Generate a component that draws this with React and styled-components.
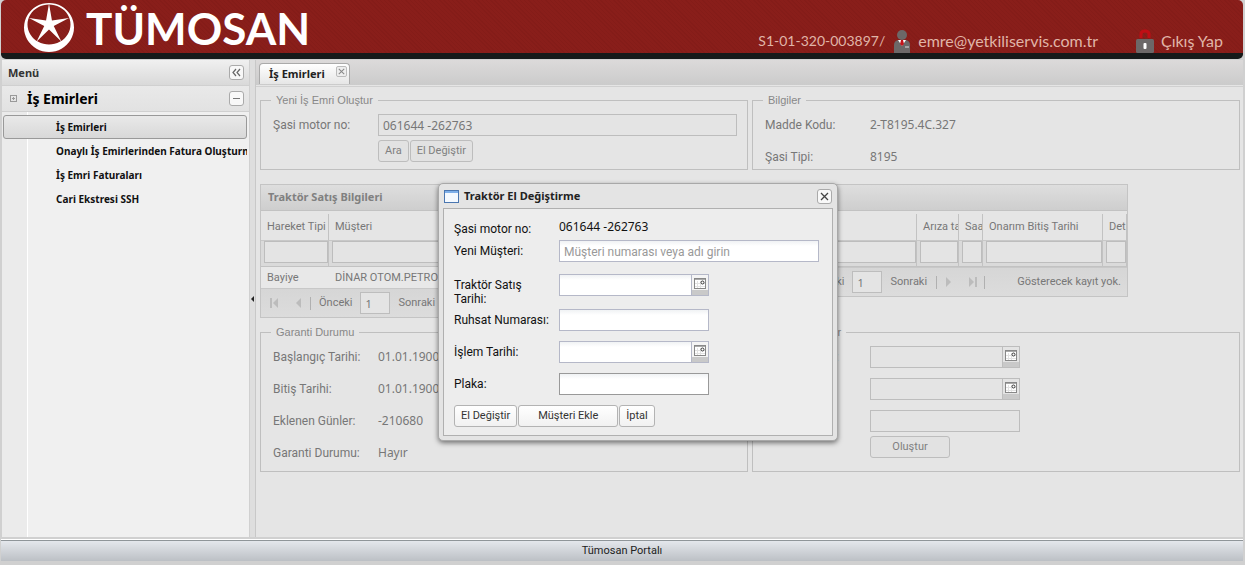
import React from "react";
import styled, { createGlobalStyle } from "styled-components";

const ui = `Roboto, Tahoma, sans-serif`;
const wide = `"Noto Sans", Tahoma, sans-serif`;

const GlobalStyle = createGlobalStyle`
  * {
    box-sizing: border-box;
  }

  body {
    margin: 0;
    background: #d0d0d0;
    color: #111;
    font: 12px/16px ${ui};
  }

  input, button {
    margin: 0;
    font-family: ${ui};
  }
`;

const Page = styled.div`
  position: relative;
  display: flex;
  flex-direction: column;
  min-height: 100vh;
  padding: 0 2px 4px 1px;
`;

/* ---------- top banner ---------- */

const Banner = styled.header`
  display: flex;
  justify-content: space-between;
  height: 59px;
  padding: 0 20px 0 22px;
  border-bottom: 6px solid #161a1a;
  border-radius: 5px;
  background: repeating-linear-gradient(45deg, transparent 0 2px, rgba(60, 0, 0, 0.06) 2px 3px), #891e1a;
`;

const Brand = styled.a`
  display: flex;
  align-items: center;
  gap: 11px;
  color: #fff;
  text-decoration: none;
`;

const BrandName = styled.span`
  padding-top: 4px;
  font: bold 44px/49px Lato, sans-serif;
`;

const Account = styled.div`
  display: flex;
  align-items: flex-end;
  font: 16px/24px Lato, sans-serif;
  color: #e0b5a8;
`;

const DealerCode = styled.span`
  font-size: 14px;
`;

const AccountLink = styled.a`
  display: flex;
  align-items: flex-end;
  gap: 7px;
  margin-left: ${(p) => p.$space}px;
  color: inherit;
  text-decoration: none;
`;

/* ---------- frame ---------- */

const Frame = styled.div`
  display: flex;
  flex: 1;
  min-height: 0;
  padding: 1px 0 3px;
`;

const Sidebar = styled.nav`
  display: flex;
  flex-direction: column;
  width: 249px;
  flex: none;
  border: 1px solid #d0d0d0;
  border-width: 0 1px;
  background: #f0f0f0;
  font-family: ${wide};
`;

const SideHeader = styled.div`
  display: flex;
  align-items: center;
  justify-content: space-between;
  height: 26px;
  padding: 0 5px 0 6px;
  border-bottom: 1px solid #d0d0d0;
  background: linear-gradient(#f0f0f0, #d9d9d9);
  font-size: 11px;
  font-weight: bold;
  color: #333;
`;

const AccordionHeader = styled(SideHeader)`
  background: linear-gradient(#e9e9e9, #e2e2e2);
  font-size: 14px;
  color: #000;
`;

const AccordionTitle = styled.span`
  display: flex;
  align-items: center;
  gap: 9px;
  padding-left: 2px;
`;

const ToolButton = styled.button`
  display: flex;
  align-items: center;
  justify-content: center;
  width: 15px;
  height: 15px;
  padding: 0;
  border: 1px solid #aaa;
  border-radius: 3px;
  background: #f8f8f8;
`;

const Tree = styled.ul`
  flex: 1;
  margin: 0;
  padding: 3px 2px 0 1px;
  list-style: none;
  background: linear-gradient(90deg, #ebebeb 25px, #fff 25px, #fff 26px, #f0f0f0 26px);
`;

const TreeLink = styled.a`
  display: block;
  overflow: hidden;
  height: 24px;
  padding-left: 52px;
  border: 1px solid ${(p) => (p.$active ? "#999" : "transparent")};
  border-right-width: ${(p) => (p.$active ? 1 : 0)}px;
  border-radius: 3px;
  background: ${(p) => (p.$active ? "linear-gradient(#e9e9e9, #d8d8d8)" : "none")};
  font-size: 10px;
  font-weight: bold;
  line-height: 22px;
  white-space: nowrap;
  color: #111;
  text-decoration: none;
`;

const Splitter = styled.div`
  display: flex;
  align-items: center;
  flex: none;
  width: 5px;
  background: #dedede;
`;

const Workspace = styled.main`
  display: flex;
  flex-direction: column;
  flex: 1;
  min-width: 0;
  border-left: 1px solid #c8c8c8;
  background: #e5e5e5;
`;

const TabBar = styled.div`
  display: flex;
  align-items: flex-end;
  height: 25px;
  padding: 0 0 1px 3px;
  background: linear-gradient(#dcdada, #cbcbcb);
`;

const Tab = styled.div`
  display: flex;
  justify-content: space-between;
  width: 91px;
  height: 21px;
  padding: 2px 2px 0 9px;
  border: 1px solid #aaa;
  border-bottom: 0;
  border-radius: 4px 4px 0 0;
  background: linear-gradient(#fff, #e6e6e6);
  font-family: ${wide};
  font-size: 11px;
  font-weight: bold;
  color: #222;
`;

const TabClose = styled.button`
  display: flex;
  width: 11px;
  height: 11px;
  padding: 1px;
  border: 1px solid #bbb;
  border-radius: 2px;
  background: #eee;
`;

const Content = styled.div`
  flex: 1;
  margin-top: 1px;
  padding: 6px 3px 0 4px;
  border-top: 1px solid #d0d0d0;
`;

const Split = styled.div`
  display: grid;
  grid-template-columns: 1fr 1fr;
  align-items: ${(p) => p.$align || "stretch"};
  gap: 4px;
  margin-bottom: ${(p) => p.$space || 0}px;
`;

/* ---------- forms ---------- */

const Group = styled.fieldset`
  display: flex;
  flex-direction: column;
  gap: 10px;
  min-width: 0;
  margin: 0;
  padding: 7px 10px ${(p) => (p.$tight ? 1 : 7)}px 12px;
  border: 1px solid #bfbfbf;
  color: #777;
`;

const Legend = styled.legend`
  margin-left: -2px;
  padding: 0 5px;
  font: 11px/14px "Liberation Sans", Arial, sans-serif;
  color: #888;
`;

const Field = styled.div`
  display: flex;
  min-height: 22px;
  line-height: 22px;
`;

const FieldLabel = styled.label`
  flex: none;
  width: 105px;
`;

const FieldValue = styled.output`
  font-family: ${wide};
`;

const Stack = styled.div`
  flex: 1;
  display: flex;
  flex-direction: column;
  align-items: flex-start;
  gap: 4px;
`;

const TextInput = styled.input`
  width: ${(p) => p.$width || "100%"};
  height: 22px;
  padding: 0 4px;
  border: 1px solid ${(p) => (p.$dim ? "#bdbdbd" : p.$strong ? "#999" : "#b5b8c8")};
  border-radius: 0;
  background: ${(p) => (p.$dim ? "#e4e4e4" : "linear-gradient(#f0f2f4, #fff 5px)")};
  font-family: ${wide};
  font-size: ${(p) => p.$size || 12}px;
  color: ${(p) => (p.$dim ? "#777" : "#111")};

  &::placeholder {
    font-family: ${ui};
    color: #999;
    opacity: 1;
  }
`;

const DateBox = styled.span`
  display: flex;
  width: 150px;
`;

const DateTrigger = styled.button`
  display: flex;
  justify-content: center;
  flex: none;
  width: 17px;
  height: 22px;
  padding: 3px 0 0;
  border: 1px solid ${(p) => (p.$dim ? "#bdbdbd" : "#b5b8c8")};
  border-left: 0;
  background: linear-gradient(${(p) => (p.$dim ? "#e4e4e4" : "#f4f4f4")} 15px, #c9c9c9 15px);
`;

const Button = styled.button`
  min-width: ${(p) => p.$width || 0}px;
  height: 22px;
  padding: 0 6px;
  border: 1px solid ${(p) => (p.$dim ? "#bdbdbd" : "#b3b3b3")};
  border-radius: 3px;
  background: ${(p) => (p.$dim ? "#e2e2e2" : "linear-gradient(#fff, #f1f1f1)")};
  font-size: 11px;
  line-height: 20px;
  color: ${(p) => (p.$dim ? "#808080" : "#333")};
`;

const ButtonRow = styled.div`
  display: flex;
  gap: 1px;
`;

/* ---------- grids ---------- */

const GridPanel = styled.section`
  width: ${(p) => p.$width || "auto"};
  min-width: 0;
  border: 1px solid #c4c4c4;
  font-size: 11px;
  color: #777;
`;

const GridTitle = styled.h2`
  height: 26px;
  margin: 0;
  padding: 0 7px;
  border-bottom: 1px solid #c2c2c2;
  background: linear-gradient(#dedede, #cecece);
  font-family: ${wide};
  font-size: 11px;
  line-height: 24px;
  color: #808080;
`;

const Table = styled.table`
  width: 100%;
  margin-top: 3px;
  border-spacing: 0;
  table-layout: fixed;
`;

const HeadCell = styled.th`
  overflow: hidden;
  width: ${(p) => (p.$width ? p.$width + "px" : "auto")};
  height: 27px;
  padding: 0 0 0 6px;
  border-right: 1px solid #c2c2c2;
  border-bottom: 1px solid #c8c8c8;
  font-weight: normal;
  text-align: left;
  white-space: nowrap;
  text-overflow: clip;
`;

const FilterCell = styled.td`
  padding: 0 0 3px 3px;
  border-right: 1px solid #c2c2c2;
  border-bottom: 1px solid #c2c2c2;
  background: #dadada;

  input {
    display: block;
  }
`;

const Cell = styled.td`
  overflow: hidden;
  height: 21px;
  padding: 0 6px;
  background: #e8e8e8;
  white-space: nowrap;
`;

const PagerBar = styled.div`
  display: flex;
  align-items: center;
  height: 29px;
  padding: 0 6px 0 2px;
  border-top: 1px solid #c8c8c8;
  background: linear-gradient(#d6d6d6, #dcdcdc);
`;

const PagerButton = styled.button`
  display: flex;
  align-items: center;
  justify-content: center;
  width: 23px;
  height: 22px;
  padding: 0;
  border: 0;
  background: none;
`;

const PagerDivider = styled.span`
  width: 1px;
  height: 13px;
  margin-left: 1px;
  background: #b0b0b0;
`;

const PagerText = styled.span`
  padding: 0 8px;
`;

const PagerTotal = styled.span`
  margin-left: auto;
`;

/* ---------- dialog ---------- */

const Dialog = styled.section`
  position: absolute;
  top: 183px;
  left: 438px;
  width: 400px;
  padding: 0 4px 4px;
  border: 1px solid #a8a8a8;
  border-radius: 5px;
  background: #e4e4e4;
  box-shadow: 0 2px 5px rgba(0, 0, 0, 0.5);
`;

const DialogHeader = styled.header`
  display: flex;
  align-items: center;
  height: 24px;
  gap: 5px;
  padding: 0 1px;
`;

const DialogTitle = styled.h1`
  flex: 1;
  margin: 0;
  font-family: ${wide};
  font-size: 11px;
  line-height: 16px;
  color: #222;
`;

const DialogBody = styled.form`
  display: flex;
  flex-direction: column;
  gap: 10px;
  padding: 9px 13px 8px 10px;
  border: 1px solid #b0b0b0;
  background: #ededed;
`;

const DialogField = styled(Field)`
  height: ${(p) => (p.$tall ? 25 : 22)}px;
  line-height: 14px;

  ${FieldLabel} {
    padding: 4px 10px 0 0;
  }
`;

const DialogIntro = styled.div`
  display: flex;
  flex-direction: column;
  padding-bottom: 2px;
`;

const DialogValue = styled(FieldValue)`
  line-height: 18px;
`;

/* ---------- footer ---------- */

const StatusBar = styled.footer`
  height: 21px;
  border-top: 1px solid #8f9599;
  box-shadow: 0 -1px #fff;
  background: linear-gradient(#e4e7ec, #bcc0c5);
  font-size: 11px;
  line-height: 19px;
  text-align: center;
  color: #222;
`;

/* ---------- drawings ---------- */

const starPoints = Array.from({ length: 10 }, (_, i) => {
  const r = i % 2 ? 5 : 21;
  const a = (Math.PI / 5) * i - Math.PI / 2;
  return `${26 + r * Math.cos(a)},${24.5 + r * Math.sin(a)}`;
}).join(" ");

const Logo = () => (
  <svg width="52" height="53" viewBox="0 0 52 53" fill="#fff" aria-hidden="true">
    <path
      fillRule="evenodd"
      d="M26 3a25 24.500 0 1 0 .01 0zM26 4.500a21.500 20 0 1 1-.01 0z"
    />
    <polygon points={starPoints} />
  </svg>
);

const UserIcon = () => (
  <svg width="18" height="24" viewBox="0 0 18 24" aria-hidden="true">
    <circle cx="9" cy="6" r="5" fill="#6c6868" />
    <path d="M1 24V16q0-4 4-5h8q4 1 4 5v8z" fill="#6c6868" />
    <path d="M5 11h8l-4 6z" fill="#fff" />
    <path d="M8 11h2l1 4-2 2-2-2z" fill="#c3141a" />
    <path d="M12 18h4" stroke="#ddd" />
  </svg>
);

const LockIcon = () => (
  <svg width="18" height="25" viewBox="0 0 18 25" aria-hidden="true">
    <path d="M5 10V6q0-3 4-3t4 3v4" fill="none" stroke="#c00d14" strokeWidth="3" />
    <rect y="11" width="18" height="14" rx="1.500" fill="#6c6868" />
    <rect x="7.500" y="15" width="3" height="6" rx="1" fill="#fff" />
  </svg>
);

const CollapseIcon = () => (
  <svg width="11" height="9" fill="none" stroke="#666" aria-hidden="true">
    <path d="M5 1L2 4.500 5 8M9 1L6 4.500 9 8" strokeWidth="1.200" />
  </svg>
);

const MinusIcon = () => (
  <svg width="9" height="9" aria-hidden="true">
    <path d="M1 4.500h7" stroke="#777" />
  </svg>
);

const NodeIcon = () => (
  <svg width="8" height="8" fill="none" stroke="#999" aria-hidden="true">
    <rect x=".5" y=".5" width="6" height="6" />
    <path d="M2 3.500h3M3.500 2v3" />
  </svg>
);

const CrossIcon = ({ size, color }) => (
  <svg width={size} height={size} viewBox="0 0 9 9" aria-hidden="true">
    <path d="M1 1l7 7M8 1L1 8" stroke={color} strokeWidth="1.300" />
  </svg>
);

const WindowIcon = () => (
  <svg width="15" height="13" aria-hidden="true">
    <rect x=".5" y=".5" width="14" height="12" fill="#f4f9ff" stroke="#4a76b0" />
    <path d="M1 2h13" stroke="#7fb0ea" strokeWidth="2" />
  </svg>
);

const CalendarIcon = () => (
  <svg width="12" height="12" aria-hidden="true">
    <rect x=".5" y=".5" width="11" height="10" fill="#fff" stroke="#888" />
    <path d="M1 1.500h10" stroke="#aaa" />
    <path d="M3.500 3v7M1 5.500h10M6.500 3v7M1 8.500h10" stroke="#e2e2e2" />
    <circle cx="8.500" cy="4.500" r="1.500" fill="#fff" stroke="#333" />
  </svg>
);

const ArrowIcon = ({ bar, flip }) => (
  <svg width="12" height="12" viewBox="0 0 12 12" aria-hidden="true">
    <g transform={flip ? "rotate(180 6 6)" : undefined} fill="#bcbcbc">
      <path d="M9 1v10L4 6z" />
      {bar && <path d="M1 1h2v10H1z" />}
    </g>
  </svg>
);

/* ---------- pieces ---------- */

const menuItems = [
  "İş Emirleri",
  "Onaylı İş Emirlerinden Fatura Oluşturma",
  "İş Emri Faturaları",
  "Cari Ekstresi SSH",
];

const warranty = [
  ["Başlangıç Tarihi:", "01.01.1900"],
  ["Bitiş Tarihi:", "01.01.1900"],
  ["Eklenen Günler:", "-210680"],
  ["Garanti Durumu:", "Hayır"],
];

const salesColumns = [{ title: "Hareket Tipi", width: 68 }, { title: "Müşteri" }];

const repairColumns = [
  { title: "İş Emri No" },
  { title: "Arıza tarihi", width: 42 },
  { title: "Saat", width: 24 },
  { title: "Onarım Bitiş Tarihi", width: 120 },
  { title: "Detay", width: 24 },
];

const ReadOnly = ({ label, value }) => (
  <Field>
    <FieldLabel as="span">{label}</FieldLabel>
    <FieldValue>{value}</FieldValue>
  </Field>
);

const DateField = ({ id, dim }) => (
  <DateBox>
    <TextInput id={id} $dim={dim} />
    <DateTrigger type="button" aria-label="Tarih seç" $dim={dim}>
      <CalendarIcon />
    </DateTrigger>
  </DateBox>
);

const Pager = ({ note }) => (
  <PagerBar>
    <PagerButton aria-label="İlk sayfa"><ArrowIcon bar /></PagerButton>
    <PagerButton aria-label="Önceki sayfa"><ArrowIcon /></PagerButton>
    <PagerDivider />
    <PagerText>Önceki</PagerText>
    <TextInput $dim $width="30px" $size={11} defaultValue="1" aria-label="Sayfa" />
    <PagerText>Sonraki</PagerText>
    <PagerDivider />
    <PagerButton aria-label="Sonraki sayfa"><ArrowIcon flip /></PagerButton>
    <PagerButton aria-label="Son sayfa"><ArrowIcon bar flip /></PagerButton>
    <PagerDivider />
    {note && <PagerTotal>{note}</PagerTotal>}
  </PagerBar>
);

const DataGrid = ({ title, columns, rows = [], width, note }) => (
  <GridPanel $width={width}>
    <GridTitle>{title}</GridTitle>
    <Table>
      <thead>
        <tr>
          {columns.map((c) => (
            <HeadCell key={c.title} $width={c.width}>{c.title}</HeadCell>
          ))}
        </tr>
        <tr>
          {columns.map((c) => (
            <FilterCell key={c.title}>
              <TextInput $dim aria-label={c.title} />
            </FilterCell>
          ))}
        </tr>
      </thead>
      <tbody>
        {rows.map((row) => (
          <tr key={row[0]}>
            {row.map((value) => (
              <Cell key={value}>{value}</Cell>
            ))}
          </tr>
        ))}
      </tbody>
    </Table>
    <Pager note={note} />
  </GridPanel>
);

const TransferDialog = () => (
  <Dialog role="dialog" aria-labelledby="transfer-title">
    <DialogHeader>
      <WindowIcon />
      <DialogTitle id="transfer-title">Traktör El Değiştirme</DialogTitle>
      <ToolButton aria-label="Kapat"><CrossIcon size={9} color="#444" /></ToolButton>
    </DialogHeader>
    <DialogBody>
      <DialogIntro>
        <DialogField>
          <FieldLabel as="span">Şasi motor no:</FieldLabel>
          <DialogValue>061644 -262763</DialogValue>
        </DialogField>
        <DialogField>
          <FieldLabel htmlFor="customer">Yeni Müşteri:</FieldLabel>
          <TextInput id="customer" placeholder="Müşteri numarası veya adı girin" />
        </DialogField>
      </DialogIntro>
      <DialogField $tall>
        <FieldLabel htmlFor="sale-date">Traktör Satış Tarihi:</FieldLabel>
        <DateField id="sale-date" />
      </DialogField>
      <DialogField>
        <FieldLabel htmlFor="licence">Ruhsat Numarası:</FieldLabel>
        <TextInput id="licence" $width="150px" />
      </DialogField>
      <DialogField>
        <FieldLabel htmlFor="process-date">İşlem Tarihi:</FieldLabel>
        <DateField id="process-date" />
      </DialogField>
      <DialogField>
        <FieldLabel htmlFor="plate">Plaka:</FieldLabel>
        <TextInput id="plate" $width="150px" $strong />
      </DialogField>
      <ButtonRow>
        <Button type="button">El Değiştir</Button>
        <Button type="button" $width={100}>Müşteri Ekle</Button>
        <Button type="button">İptal</Button>
      </ButtonRow>
    </DialogBody>
  </Dialog>
);

const App = () => {
  return (
    <>
      <GlobalStyle />
      <Page>
        <Banner>
          <Brand href="#">
            <Logo />
            <BrandName>TÜMOSAN</BrandName>
          </Brand>
          <Account>
            <DealerCode>S1-01-320-003897/</DealerCode>
            <AccountLink href="#" $space={8}>
              <UserIcon />
              emre@yetkiliservis.com.tr
            </AccountLink>
            <AccountLink href="#" $space={38}>
              <LockIcon />
              Çıkış Yap
            </AccountLink>
          </Account>
        </Banner>

        <Frame>
          <Sidebar>
            <SideHeader>
              Menü
              <ToolButton aria-label="Menüyü daralt"><CollapseIcon /></ToolButton>
            </SideHeader>
            <AccordionHeader>
              <AccordionTitle>
                <NodeIcon />
                İş Emirleri
              </AccordionTitle>
              <ToolButton aria-label="Kapat"><MinusIcon /></ToolButton>
            </AccordionHeader>
            <Tree>
              {menuItems.map((item, i) => (
                <li key={item}>
                  <TreeLink href="#" $active={i === 0}>{item}</TreeLink>
                </li>
              ))}
            </Tree>
          </Sidebar>
          <Splitter>
            <svg width="5" height="8" aria-hidden="true">
              <path d="M4 1v6L1 4z" fill="#222" />
            </svg>
          </Splitter>

          <Workspace>
            <TabBar>
              <Tab>
                İş Emirleri
                <TabClose aria-label="Sekmeyi kapat"><CrossIcon size={7} color="#888" /></TabClose>
              </Tab>
            </TabBar>
            <Content>
              <Split $space={14}>
                <Group>
                  <Legend>Yeni İş Emri Oluştur</Legend>
                  <Field>
                    <FieldLabel htmlFor="chassis">Şasi motor no:</FieldLabel>
                    <Stack>
                      <TextInput id="chassis" $dim defaultValue="061644 -262763" />
                      <ButtonRow>
                        <Button $dim>Ara</Button>
                        <Button $dim>El Değiştir</Button>
                      </ButtonRow>
                    </Stack>
                  </Field>
                </Group>
                <Group $tight>
                  <Legend>Bilgiler</Legend>
                  <ReadOnly label="Madde Kodu:" value="2-T8195.4C.327" />
                  <ReadOnly label="Şasi Tipi:" value="8195" />
                </Group>
              </Split>

              <Split $space={7} $align="start">
                <DataGrid
                  title="Traktör Satış Bilgileri"
                  columns={salesColumns}
                  rows={[["Bayiye", "DİNAR OTOM.PETROL"]]}
                />
                <DataGrid
                  title="İş Emirleri"
                  columns={repairColumns}
                  width="376px"
                  note="Gösterecek kayıt yok."
                />
              </Split>

              <Split>
                <Group>
                  <Legend>Garanti Durumu</Legend>
                  {warranty.map(([label, value]) => (
                    <ReadOnly key={label} label={label} value={value} />
                  ))}
                </Group>
                <Group>
                  <Legend>Garanti Ayarlar</Legend>
                  <Field>
                    <FieldLabel htmlFor="start">Garanti Tarihi:</FieldLabel>
                    <DateField id="start" dim />
                  </Field>
                  <Field>
                    <FieldLabel htmlFor="end">Bitiş Tarihi:</FieldLabel>
                    <DateField id="end" dim />
                  </Field>
                  <Field>
                    <FieldLabel htmlFor="days">Gün:</FieldLabel>
                    <Stack>
                      <TextInput id="days" $dim $width="150px" />
                      <Button $dim $width={80}>Oluştur</Button>
                    </Stack>
                  </Field>
                </Group>
              </Split>
            </Content>
          </Workspace>
        </Frame>

        <StatusBar>Tümosan Portalı</StatusBar>
        <TransferDialog />
      </Page>
    </>
  );
};

export default App;
